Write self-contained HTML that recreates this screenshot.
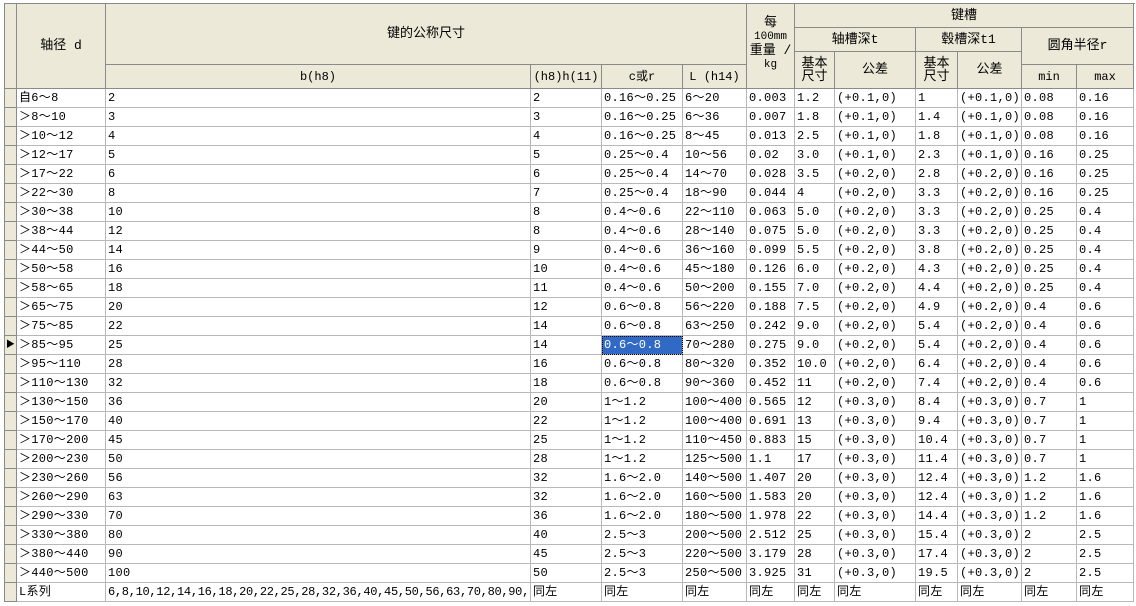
<!DOCTYPE html>
<html><head><meta charset="utf-8"><style>
body{margin:0;background:#fff;width:1136px;height:606px;overflow:hidden;position:relative}
table{position:absolute;left:4px;top:3px;width:1129px;border-collapse:collapse;table-layout:fixed;font:12px "Liberation Mono","Noto Sans CJK SC",monospace;color:#000}
td{border:1px solid #b8b8b8;height:18px;padding:0 0 0 2px;white-space:nowrap;overflow:hidden;line-height:18px;background:#fff;letter-spacing:.3px}
th{background:#ece9d8;border:1px solid #8a8a8a;font-weight:normal;padding:0;text-align:center;line-height:14px;overflow:hidden;font-size:13px}
td.rh{background:#ece9d8;border-color:#8a8a8a;padding:0}
.sel{background:#316ac5;color:#fff;outline:1px dotted #000;outline-offset:-1px}
.sm{font-size:11px}
</style></head><body>
<table>
<colgroup><col style="width:12px"><col style="width:89px"><col style="width:425px"><col style="width:71px"><col style="width:81px"><col style="width:64px"><col style="width:48px"><col style="width:40px"><col style="width:81px"><col style="width:42px"><col style="width:64px"><col style="width:55px"><col style="width:57px"></colgroup>
<tr style="height:24px"><th rowspan="4"></th><th rowspan="4">轴径 d</th><th colspan="4" rowspan="3">键的公称尺寸</th><th rowspan="4" style="vertical-align:top;padding-top:12px;line-height:13px">每<br><span class="sm">100mm</span><br>重量 /<br><span class="sm">kg</span></th><th colspan="7">键槽</th></tr>
<tr style="height:24px"><th colspan="2">轴槽深t</th><th colspan="2">毂槽深t1</th><th colspan="2" rowspan="2">圆角半径r</th></tr>
<tr style="height:13px"><th rowspan="2" style="line-height:13px">基本<br>尺寸</th><th rowspan="2">公差</th><th rowspan="2" style="line-height:13px">基本<br>尺寸</th><th rowspan="2">公差</th></tr>
<tr style="height:24px"><th style="font-size:12px">b(h8)</th><th style="font-size:12px">(h8)h(11)</th><th style="font-size:12px">c或r</th><th style="font-size:12px">L (h14)</th><th style="font-size:12px">min</th><th style="font-size:12px">max</th></tr>
<tr><td class="rh"></td><td>自6～8</td><td>2</td><td>2</td><td>0.16～0.25</td><td>6～20</td><td>0.003</td><td>1.2</td><td>(+0.1,0)</td><td>1</td><td>(+0.1,0)</td><td>0.08</td><td>0.16</td></tr>
<tr><td class="rh"></td><td>＞8～10</td><td>3</td><td>3</td><td>0.16～0.25</td><td>6～36</td><td>0.007</td><td>1.8</td><td>(+0.1,0)</td><td>1.4</td><td>(+0.1,0)</td><td>0.08</td><td>0.16</td></tr>
<tr><td class="rh"></td><td>＞10～12</td><td>4</td><td>4</td><td>0.16～0.25</td><td>8～45</td><td>0.013</td><td>2.5</td><td>(+0.1,0)</td><td>1.8</td><td>(+0.1,0)</td><td>0.08</td><td>0.16</td></tr>
<tr><td class="rh"></td><td>＞12～17</td><td>5</td><td>5</td><td>0.25～0.4</td><td>10～56</td><td>0.02</td><td>3.0</td><td>(+0.1,0)</td><td>2.3</td><td>(+0.1,0)</td><td>0.16</td><td>0.25</td></tr>
<tr><td class="rh"></td><td>＞17～22</td><td>6</td><td>6</td><td>0.25～0.4</td><td>14～70</td><td>0.028</td><td>3.5</td><td>(+0.2,0)</td><td>2.8</td><td>(+0.2,0)</td><td>0.16</td><td>0.25</td></tr>
<tr><td class="rh"></td><td>＞22～30</td><td>8</td><td>7</td><td>0.25～0.4</td><td>18～90</td><td>0.044</td><td>4</td><td>(+0.2,0)</td><td>3.3</td><td>(+0.2,0)</td><td>0.16</td><td>0.25</td></tr>
<tr><td class="rh"></td><td>＞30～38</td><td>10</td><td>8</td><td>0.4～0.6</td><td>22～110</td><td>0.063</td><td>5.0</td><td>(+0.2,0)</td><td>3.3</td><td>(+0.2,0)</td><td>0.25</td><td>0.4</td></tr>
<tr><td class="rh"></td><td>＞38～44</td><td>12</td><td>8</td><td>0.4～0.6</td><td>28～140</td><td>0.075</td><td>5.0</td><td>(+0.2,0)</td><td>3.3</td><td>(+0.2,0)</td><td>0.25</td><td>0.4</td></tr>
<tr><td class="rh"></td><td>＞44～50</td><td>14</td><td>9</td><td>0.4～0.6</td><td>36～160</td><td>0.099</td><td>5.5</td><td>(+0.2,0)</td><td>3.8</td><td>(+0.2,0)</td><td>0.25</td><td>0.4</td></tr>
<tr><td class="rh"></td><td>＞50～58</td><td>16</td><td>10</td><td>0.4～0.6</td><td>45～180</td><td>0.126</td><td>6.0</td><td>(+0.2,0)</td><td>4.3</td><td>(+0.2,0)</td><td>0.25</td><td>0.4</td></tr>
<tr><td class="rh"></td><td>＞58～65</td><td>18</td><td>11</td><td>0.4～0.6</td><td>50～200</td><td>0.155</td><td>7.0</td><td>(+0.2,0)</td><td>4.4</td><td>(+0.2,0)</td><td>0.25</td><td>0.4</td></tr>
<tr><td class="rh"></td><td>＞65～75</td><td>20</td><td>12</td><td>0.6～0.8</td><td>56～220</td><td>0.188</td><td>7.5</td><td>(+0.2,0)</td><td>4.9</td><td>(+0.2,0)</td><td>0.4</td><td>0.6</td></tr>
<tr><td class="rh"></td><td>＞75～85</td><td>22</td><td>14</td><td>0.6～0.8</td><td>63～250</td><td>0.242</td><td>9.0</td><td>(+0.2,0)</td><td>5.4</td><td>(+0.2,0)</td><td>0.4</td><td>0.6</td></tr>
<tr><td class="rh" style="font-size:9px;text-align:center">▶</td><td>＞85～95</td><td>25</td><td>14</td><td class="sel">0.6～0.8</td><td>70～280</td><td>0.275</td><td>9.0</td><td>(+0.2,0)</td><td>5.4</td><td>(+0.2,0)</td><td>0.4</td><td>0.6</td></tr>
<tr><td class="rh"></td><td>＞95～110</td><td>28</td><td>16</td><td>0.6～0.8</td><td>80～320</td><td>0.352</td><td>10.0</td><td>(+0.2,0)</td><td>6.4</td><td>(+0.2,0)</td><td>0.4</td><td>0.6</td></tr>
<tr><td class="rh"></td><td>＞110～130</td><td>32</td><td>18</td><td>0.6～0.8</td><td>90～360</td><td>0.452</td><td>11</td><td>(+0.2,0)</td><td>7.4</td><td>(+0.2,0)</td><td>0.4</td><td>0.6</td></tr>
<tr><td class="rh"></td><td>＞130～150</td><td>36</td><td>20</td><td>1～1.2</td><td>100～400</td><td>0.565</td><td>12</td><td>(+0.3,0)</td><td>8.4</td><td>(+0.3,0)</td><td>0.7</td><td>1</td></tr>
<tr><td class="rh"></td><td>＞150～170</td><td>40</td><td>22</td><td>1～1.2</td><td>100～400</td><td>0.691</td><td>13</td><td>(+0.3,0)</td><td>9.4</td><td>(+0.3,0)</td><td>0.7</td><td>1</td></tr>
<tr><td class="rh"></td><td>＞170～200</td><td>45</td><td>25</td><td>1～1.2</td><td>110～450</td><td>0.883</td><td>15</td><td>(+0.3,0)</td><td>10.4</td><td>(+0.3,0)</td><td>0.7</td><td>1</td></tr>
<tr><td class="rh"></td><td>＞200～230</td><td>50</td><td>28</td><td>1～1.2</td><td>125～500</td><td>1.1</td><td>17</td><td>(+0.3,0)</td><td>11.4</td><td>(+0.3,0)</td><td>0.7</td><td>1</td></tr>
<tr><td class="rh"></td><td>＞230～260</td><td>56</td><td>32</td><td>1.6～2.0</td><td>140～500</td><td>1.407</td><td>20</td><td>(+0.3,0)</td><td>12.4</td><td>(+0.3,0)</td><td>1.2</td><td>1.6</td></tr>
<tr><td class="rh"></td><td>＞260～290</td><td>63</td><td>32</td><td>1.6～2.0</td><td>160～500</td><td>1.583</td><td>20</td><td>(+0.3,0)</td><td>12.4</td><td>(+0.3,0)</td><td>1.2</td><td>1.6</td></tr>
<tr><td class="rh"></td><td>＞290～330</td><td>70</td><td>36</td><td>1.6～2.0</td><td>180～500</td><td>1.978</td><td>22</td><td>(+0.3,0)</td><td>14.4</td><td>(+0.3,0)</td><td>1.2</td><td>1.6</td></tr>
<tr><td class="rh"></td><td>＞330～380</td><td>80</td><td>40</td><td>2.5～3</td><td>200～500</td><td>2.512</td><td>25</td><td>(+0.3,0)</td><td>15.4</td><td>(+0.3,0)</td><td>2</td><td>2.5</td></tr>
<tr><td class="rh"></td><td>＞380～440</td><td>90</td><td>45</td><td>2.5～3</td><td>220～500</td><td>3.179</td><td>28</td><td>(+0.3,0)</td><td>17.4</td><td>(+0.3,0)</td><td>2</td><td>2.5</td></tr>
<tr><td class="rh"></td><td>＞440～500</td><td>100</td><td>50</td><td>2.5～3</td><td>250～500</td><td>3.925</td><td>31</td><td>(+0.3,0)</td><td>19.5</td><td>(+0.3,0)</td><td>2</td><td>2.5</td></tr>
<tr><td class="rh"></td><td>L系列</td><td style="letter-spacing:-.3px">6,8,10,12,14,16,18,20,22,25,28,32,36,40,45,50,56,63,70,80,90,</td><td>同左</td><td>同左</td><td>同左</td><td>同左</td><td>同左</td><td>同左</td><td>同左</td><td>同左</td><td>同左</td><td>同左</td></tr>
</table>
</body></html>
